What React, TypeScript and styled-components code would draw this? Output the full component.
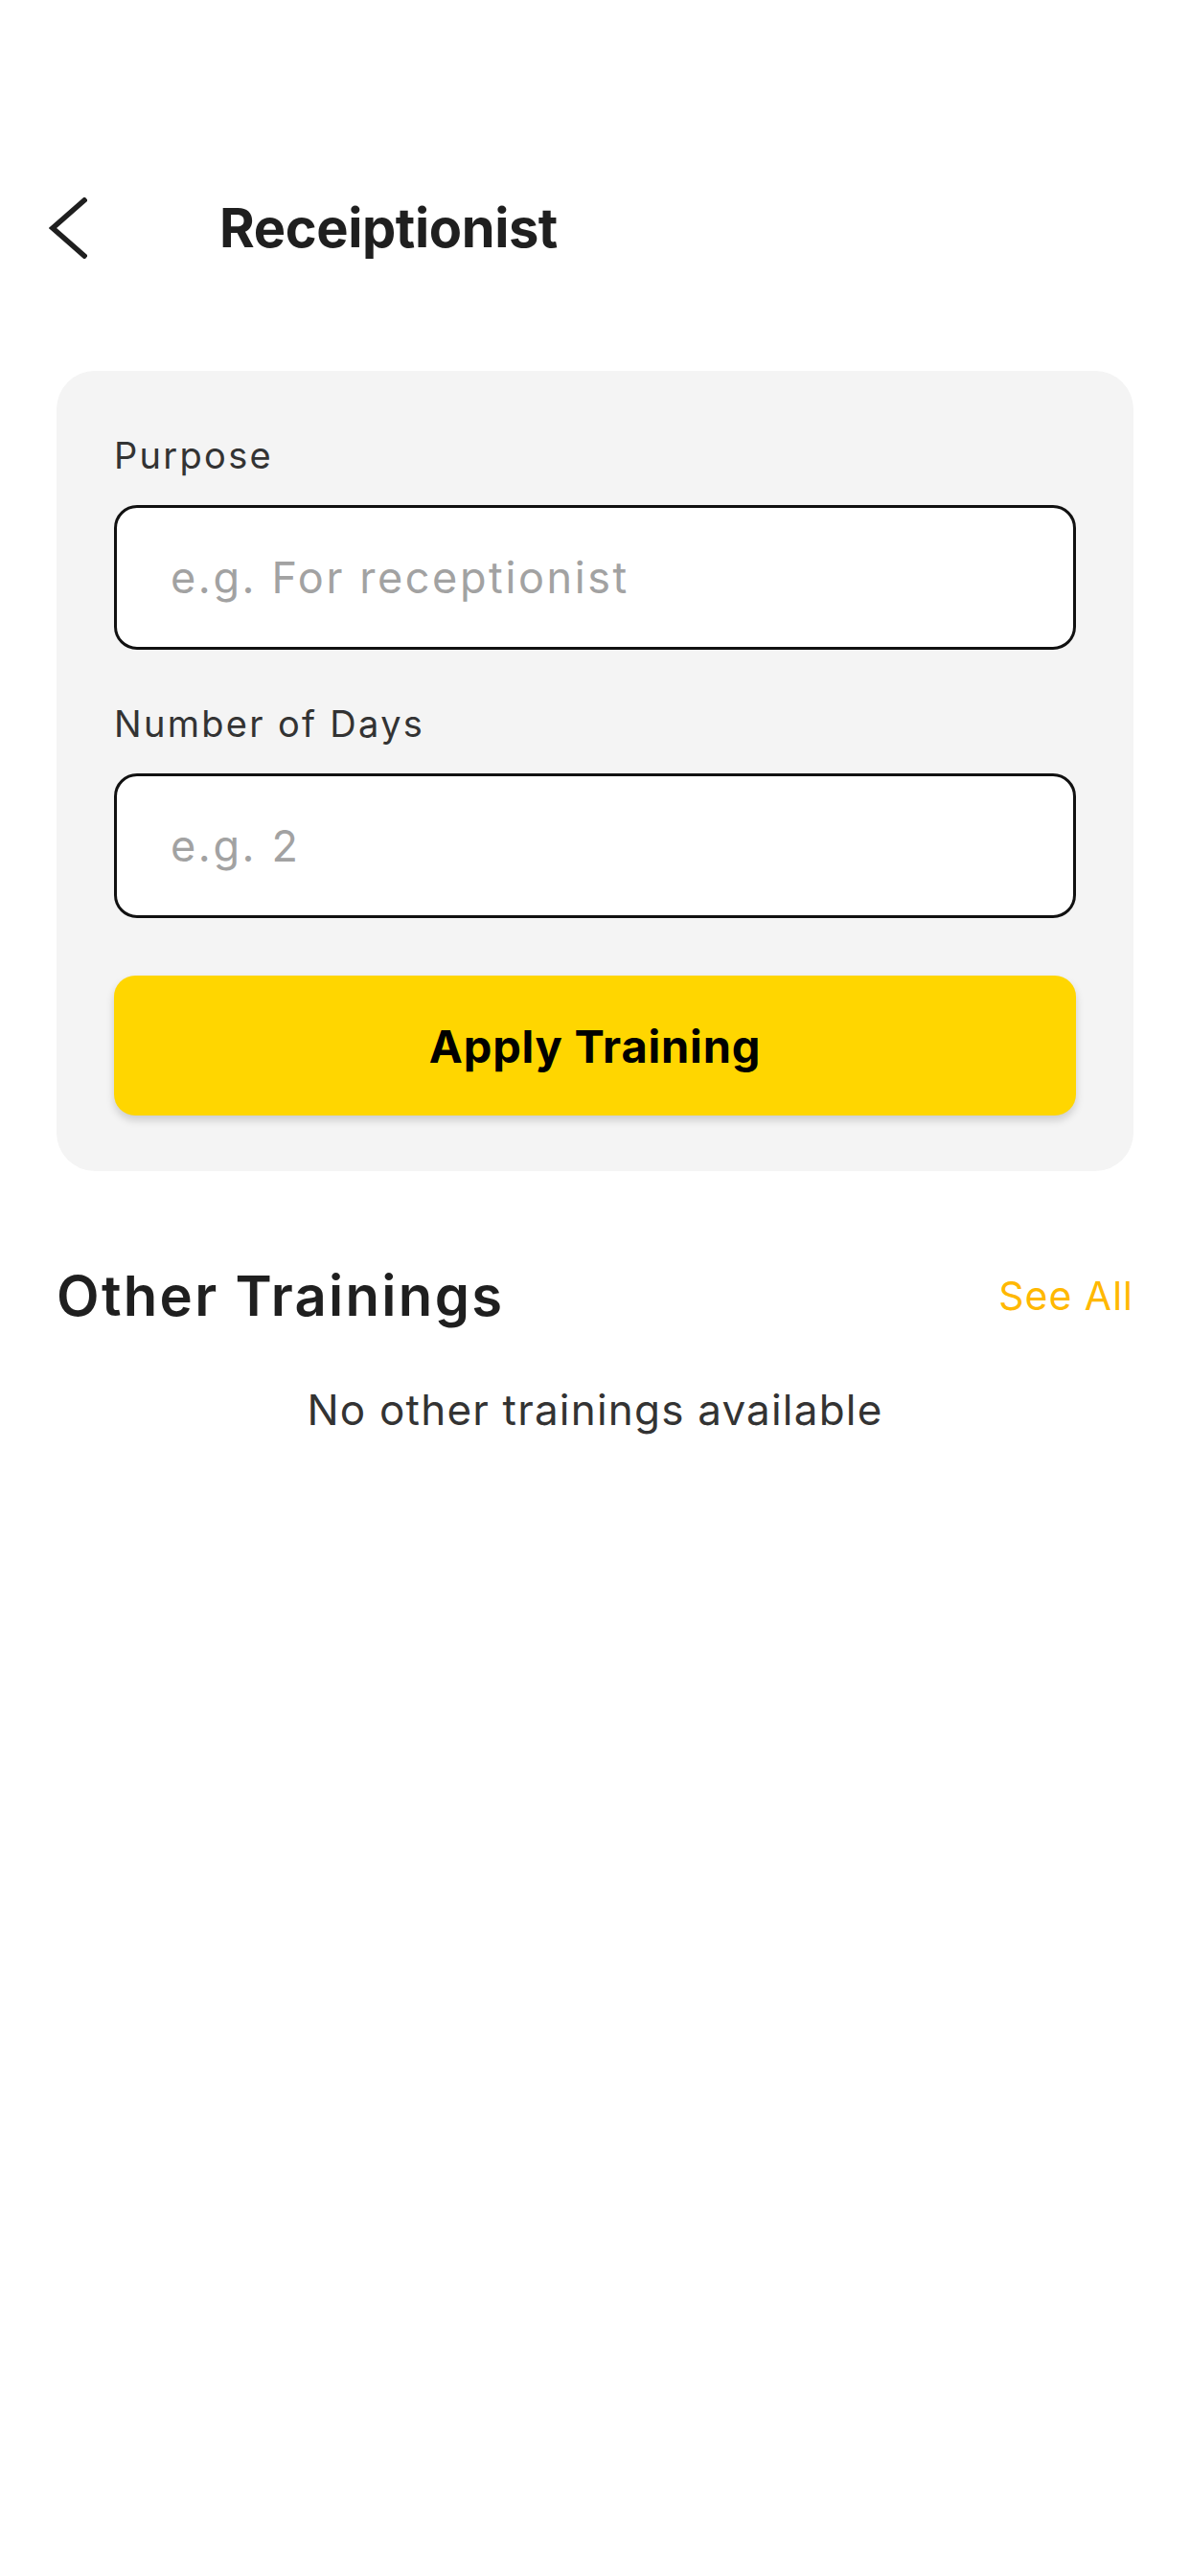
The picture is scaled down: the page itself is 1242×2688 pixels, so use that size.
import React from 'react'
import styled, { createGlobalStyle } from 'styled-components'

const GlobalStyle = createGlobalStyle`
  html, body {
    margin: 0;
    padding: 0;
    background: #ffffff;
  }
  body {
    font-family: Inter, "Noto Sans", "Liberation Sans", sans-serif;
    color: #222222;
  }
  * {
    box-sizing: border-box;
  }
`

const Screen = styled.div`
  width: 1242px;
  min-height: 2688px;
  background: #ffffff;
  display: flex;
  flex-direction: column;
`

const Header = styled.div`
  display: flex;
  flex-direction: row;
  align-items: center;
  height: 120px;
  margin-top: 178px;
  padding-left: 51px;
`

const BackButton = styled.button`
  display: flex;
  align-items: center;
  justify-content: center;
  width: 40px;
  height: 64px;
  padding: 0;
  border: 0;
  background: transparent;
  cursor: pointer;
`

const Title = styled.h1`
  margin: 0 0 0 138px;
  font-size: 56px;
  font-weight: 700;
  letter-spacing: -0.4px;
  color: #1f1f1f;
`

const Content = styled.div`
  display: flex;
  flex-direction: column;
  padding: 89px 59px 0 59px;
`

const FormCard = styled.div`
  display: flex;
  flex-direction: column;
  background: #f4f4f4;
  border-radius: 40px;
  padding: 64px 60px 58px 60px;
`

const Label = styled.label`
  display: block;
  font-size: 38px;
  line-height: 48px;
  letter-spacing: 2.3px;
  color: #333333;
  margin-bottom: 28px;
`

const Field = styled.input<{ $spaced?: boolean }>`
  width: 100%;
  height: 151px;
  border: 3px solid #111111;
  border-radius: 24px;
  background: #ffffff;
  padding: 0 56px;
  font-family: inherit;
  font-size: 45px;
  letter-spacing: 2.6px;
  color: #222222;
  outline: 0;
  margin-bottom: ${({ $spaced }) => ($spaced ? '53px' : '0')};

  &::placeholder {
    color: #a2a2a2;
  }
`

const ApplyButton = styled.button`
  width: 100%;
  height: 146px;
  margin-top: 60px;
  border: 0;
  border-radius: 22px;
  background: #ffd600;
  box-shadow: 0 5px 9px rgba(0, 0, 0, 0.16);
  font-family: inherit;
  font-size: 47px;
  font-weight: 700;
  letter-spacing: 0.8px;
  color: #000000;
  cursor: pointer;
`

const SectionRow = styled.div`
  display: flex;
  flex-direction: row;
  justify-content: space-between;
  align-items: center;
  height: 72px;
  margin-top: 94px;
`

const SectionTitle = styled.h2`
  margin: 0;
  font-size: 58px;
  font-weight: 600;
  letter-spacing: 2.3px;
  color: #1f1f1f;
`

const SeeAll = styled.a`
  font-size: 41px;
  letter-spacing: 1px;
  color: #ffb800;
  text-decoration: none;
  cursor: pointer;
`

const EmptyText = styled.p`
  margin: 55px 0 0 0;
  text-align: center;
  font-size: 44px;
  line-height: 56px;
  letter-spacing: 1.2px;
  color: #333333;
`

const ChevronLeft = () => (
  <svg width="40" height="64" viewBox="0 0 40 64" fill="none">
    <path d="M37 3 L4 32 L37 61" stroke="#1f1f1f" strokeWidth="5.5" strokeLinecap="square" strokeLinejoin="miter" />
  </svg>
)

const App = () => {
  return (
    <Screen>
      <GlobalStyle />
      <Header>
        <BackButton aria-label="Back">
          <ChevronLeft />
        </BackButton>
        <Title>Receiptionist</Title>
      </Header>

      <Content>
        <FormCard>
          <Label htmlFor="purpose">Purpose</Label>
          <Field id="purpose" placeholder="e.g. For receptionist" $spaced />

          <Label htmlFor="days">Number of Days</Label>
          <Field id="days" placeholder="e.g. 2" />

          <ApplyButton>Apply Training</ApplyButton>
        </FormCard>

        <SectionRow>
          <SectionTitle>Other Trainings</SectionTitle>
          <SeeAll>See All</SeeAll>
        </SectionRow>

        <EmptyText>No other trainings available</EmptyText>
      </Content>
    </Screen>
  )
}

export default App
